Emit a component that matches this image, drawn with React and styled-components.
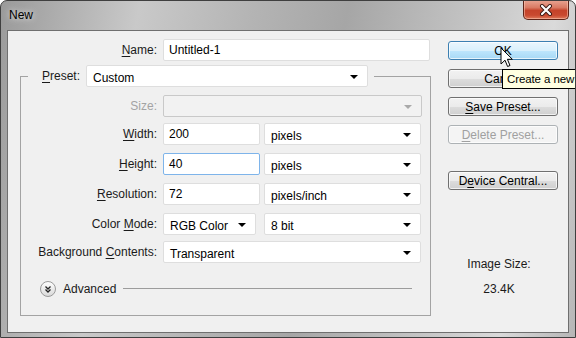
import React from "react";
import styled, { createGlobalStyle, css } from "styled-components";

const GlobalStyle = createGlobalStyle`
  html, body {
    margin: 0;
    padding: 0;
    overflow: hidden;
    background: #ffffff;
  }
  * {
    box-sizing: border-box;
  }
`;

const Window = styled.div`
  position: relative;
  width: 576px;
  height: 338px;
  overflow: hidden;
  border: 1px solid #3f3f3f;
  border-radius: 7px 7px 0 0;
  padding: 0 6px 4px 6px;
  display: flex;
  flex-direction: column;
  background: linear-gradient(
    100deg,
    #9a9a9a 0%,
    #c9c9c9 22%,
    #b4b4b4 40%,
    #a6a6a6 55%,
    #c4c4c4 75%,
    #dadada 88%,
    #b6b6b6 100%
  );
  font-family: "Liberation Sans", Arial, sans-serif;
  font-size: 12px;
  color: #1a1a1a;
`;

const TitleBar = styled.div`
  height: 29px;
  display: flex;
  align-items: center;
  padding-left: 2px;
  padding-bottom: 1px;
`;

const Title = styled.span`
  font-size: 12px;
  color: #000;
  text-shadow: 0 0 6px rgba(255, 255, 255, 0.9);
`;

const CloseButton = styled.div`
  position: absolute;
  top: -1px;
  right: 6px;
  width: 46px;
  height: 20px;
  border: 1px solid #5e2418;
  border-top: none;
  border-radius: 0 0 5px 5px;
  background: linear-gradient(
    to bottom,
    #e9a694 0%,
    #d97a63 40%,
    #c5432a 55%,
    #c9492f 80%,
    #de7a5c 100%
  );
  box-shadow: inset 0 0 0 1px rgba(255, 210, 190, 0.5);
  display: flex;
  align-items: center;
  justify-content: center;
`;

const Client = styled.div`
  flex: 1;
  display: flex;
  border: 1px solid #6f6f6f;
  background: #f0f0f0;
`;

const FormColumn = styled.div`
  width: 411px;
  margin-left: 12px;
  padding-top: 8px;
  display: flex;
  flex-direction: column;
`;

const Row = styled.div`
  display: grid;
  grid-template-columns: ${(p) => p.$label || 136}px auto;
  column-gap: 6px;
  align-items: center;
  height: 22px;
  margin-top: ${(p) => p.$mt || 0}px;
`;

const Fields = styled.div`
  display: flex;
  gap: 4px;
`;

const Label = styled.span`
  text-align: right;
  white-space: nowrap;
  color: ${(p) => (p.$disabled ? "#a3a3a3" : "#1a1a1a")};
  u {
    text-decoration: underline;
    text-underline-offset: 2px;
  }
`;

const boxBase = css`
  height: 22px;
  background: #ffffff;
  border: 1px solid #dedede;
  border-radius: 2px;
  white-space: nowrap;
  overflow: hidden;
  color: #000;
`;

const TextInput = styled.div`
  ${boxBase};
  width: ${(p) => p.$w}px;
  padding: 3px 0 0 5px;
  ${(p) =>
    p.$focused &&
    css`
      border-color: #7eb4ea;
    `}
`;

const Select = styled.div`
  ${boxBase};
  position: relative;
  width: ${(p) => p.$w}px;
  margin-left: ${(p) => p.$ml || 0}px;
  padding: 5px 0 0 6px;
  ${(p) =>
    p.$disabled &&
    css`
      background: #f2f2f2;
      border-color: #c9c9c9;
    `}
  &::after {
    content: "";
    position: absolute;
    right: 9px;
    top: 9px;
    border-left: 4px solid transparent;
    border-right: 4px solid transparent;
    border-top: 4px solid ${(p) => (p.$disabled ? "#a9a9a9" : "#000")};
  }
`;

const Group = styled.fieldset`
  margin: 4px 0 0 0;
  padding: 0 10px 18px 0;
  border: 1px solid #a3a3a3;
  min-width: 0;
`;

const Legend = styled.legend`
  display: flex;
  align-items: center;
  margin-left: 7px;
  padding: 0 6px 0 14px;
  ${Label} {
    width: 38px;
    text-align: left;
    margin-right: 6px;
  }
`;

const AdvancedRow = styled.div`
  display: flex;
  align-items: center;
  height: 17px;
  margin-top: 17px;
  padding-left: 19px;
  gap: 7px;
`;

const Rule = styled.div`
  flex: 1;
  height: 1px;
  margin-right: 8px;
  background: #9c9c9c;
`;

const SideColumn = styled.div`
  width: 110px;
  margin-left: 17px;
  padding-top: 10px;
  display: flex;
  flex-direction: column;
`;

const Button = styled.div`
  height: 19px;
  margin-top: ${(p) => p.$mt ?? 9}px;
  border: 1px solid #707070;
  border-radius: 3px;
  display: flex;
  align-items: center;
  justify-content: center;
  background: linear-gradient(
    to bottom,
    #f2f2f2 0%,
    #ebebeb 50%,
    #dddddd 51%,
    #cfcfcf 100%
  );
  box-shadow: inset 0 0 0 1px rgba(255, 255, 255, 0.7);
  color: #000;
  white-space: nowrap;
  u {
    text-underline-offset: 2px;
  }
  ${(p) =>
    p.$hover &&
    css`
      border-color: #3c7fb1;
      background: linear-gradient(
        to bottom,
        #eaf6fd 0%,
        #d9f0fc 50%,
        #bee6fd 51%,
        #a7d9f5 100%
      );
    `}
  ${(p) =>
    p.$disabled &&
    css`
      border-color: #adb2b5;
      background: #f4f4f4;
      color: #a0a0a0;
    `}
`;

const SizeInfo = styled.div`
  margin-top: ${(p) => p.$mt}px;
  padding-right: 8px;
  text-align: center;
  line-height: 14px;
`;

const Tooltip = styled.div`
  position: absolute;
  left: 501px;
  top: 68px;
  height: 20px;
  padding: 3px 30px 0 4px;
  background: #ffffe1;
  border: 1px solid #000;
  color: #000;
  font-size: 11.5px;
  letter-spacing: -0.1px;
  white-space: nowrap;
`;

const Cursor = styled.svg`
  position: absolute;
  left: 499px;
  top: 46px;
`;

const ExpandIcon = () => (
  <svg width="16" height="16" viewBox="0 0 16 16">
    <defs>
      <linearGradient id="adv" x1="0" y1="0" x2="0" y2="1">
        <stop offset="0" stopColor="#ffffff" />
        <stop offset="1" stopColor="#d8d8d8" />
      </linearGradient>
    </defs>
    <circle cx="8" cy="8" r="7.5" fill="url(#adv)" stroke="#9a9a9a" />
    <path d="M5.5 5.5 L8 8 L10.5 5.5 M5.5 8.5 L8 11 L10.5 8.5" fill="none" stroke="#222" strokeWidth="1.3" />
  </svg>
);

const CloseGlyph = () => (
  <svg width="14" height="12" viewBox="0 0 14 12">
    <path d="M3 2 L11 10 M11 2 L3 10" stroke="#3a1a14" strokeWidth="4" strokeLinecap="round" />
    <path d="M3 2 L11 10 M11 2 L3 10" stroke="#ffffff" strokeWidth="2.2" strokeLinecap="round" />
  </svg>
);

export default function App() {
  return (
    <>
      <GlobalStyle />
      <Window>
        <TitleBar>
          <Title>New</Title>
          <CloseButton>
            <CloseGlyph />
          </CloseButton>
        </TitleBar>
        <Client>
          <FormColumn>
            <Row $label={137}>
              <Label>
                <u>N</u>ame:
              </Label>
              <TextInput $w={267}>Untitled-1</TextInput>
            </Row>
            <Group>
              <Legend>
                <Label>
                  <u>P</u>reset:
                </Label>
                <Select $w={282}>Custom</Select>
              </Legend>
              <Row $mt={8}>
                <Label $disabled>Size:</Label>
                <Select $w={259} $disabled />
              </Row>
              <Row $mt={6}>
                <Label>
                  <u>W</u>idth:
                </Label>
                <Fields>
                  <TextInput $w={97}>200</TextInput>
                  <Select $w={157}>pixels</Select>
                </Fields>
              </Row>
              <Row $mt={8}>
                <Label>
                  <u>H</u>eight:
                </Label>
                <Fields>
                  <TextInput $w={97} $focused>
                    40
                  </TextInput>
                  <Select $w={157}>pixels</Select>
                </Fields>
              </Row>
              <Row $mt={8}>
                <Label>
                  <u>R</u>esolution:
                </Label>
                <Fields>
                  <TextInput $w={97}>72</TextInput>
                  <Select $w={157}>pixels/inch</Select>
                </Fields>
              </Row>
              <Row $mt={8}>
                <Label>
                  Color <u>M</u>ode:
                </Label>
                <Fields>
                  <Select $w={93}>RGB Color</Select>
                  <Select $w={157} $ml={4}>
                    8 bit
                  </Select>
                </Fields>
              </Row>
              <Row $mt={6}>
                <Label>
                  Background <u>C</u>ontents:
                </Label>
                <Select $w={258}>Transparent</Select>
              </Row>
              <AdvancedRow>
                <ExpandIcon />
                <span>Advanced</span>
                <Rule />
              </AdvancedRow>
            </Group>
          </FormColumn>
          <SideColumn>
            <Button $mt={0} $hover>
              OK
            </Button>
            <Button>Cancel</Button>
            <Button>
              <u>S</u>ave Preset...
            </Button>
            <Button $disabled>
              <u>D</u>elete Preset...
            </Button>
            <Button $mt={27}>
              D<u>e</u>vice Central...
            </Button>
            <SizeInfo $mt={67}>Image Size:</SizeInfo>
            <SizeInfo $mt={11}>23.4K</SizeInfo>
          </SideColumn>
        </Client>
        <Tooltip>Create a new</Tooltip>
        <Cursor width="13" height="21" viewBox="0 0 13 21">
          <path
            d="M1 1 L1 17 L5 13.2 L7.6 19.5 L10 18.5 L7.4 12.3 L12.4 12.3 Z"
            fill="#ffffff"
            stroke="#000000"
            strokeWidth="1"
            strokeLinejoin="miter"
          />
        </Cursor>
      </Window>
    </>
  );
}
